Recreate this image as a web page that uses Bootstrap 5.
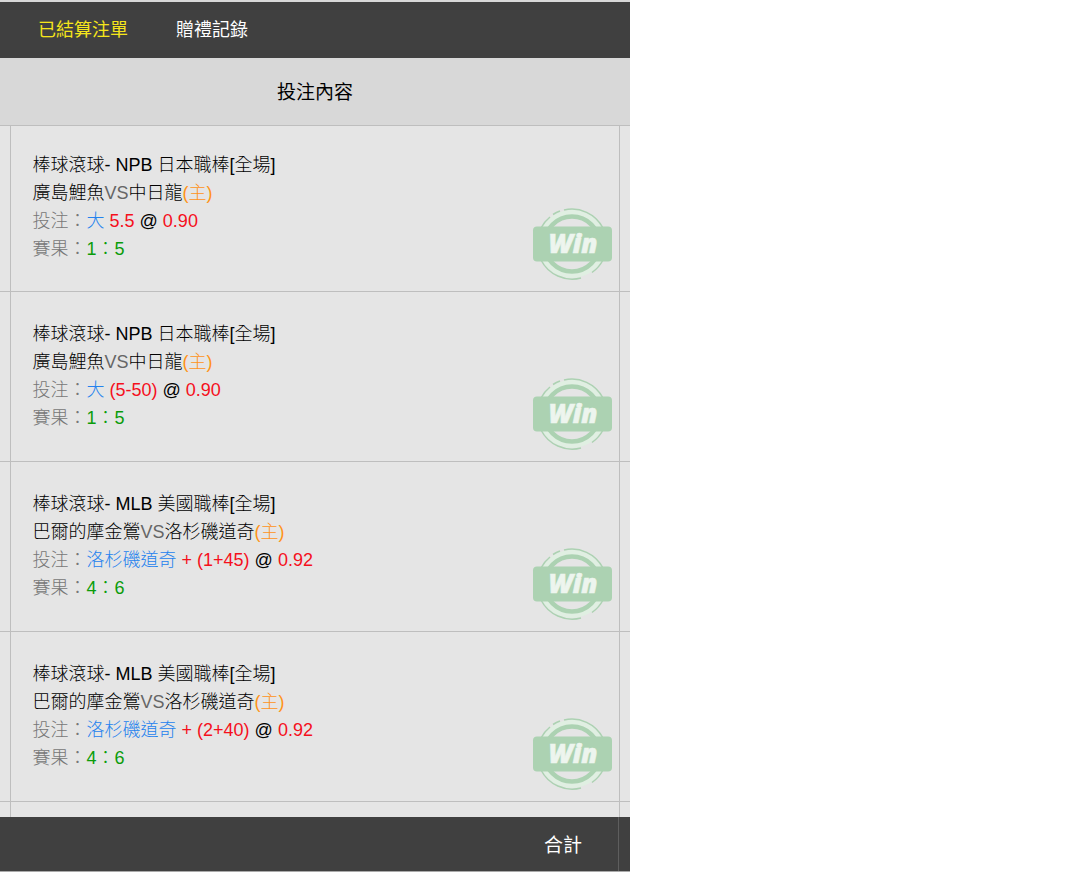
<!DOCTYPE html>
<html lang="zh-Hant">
<head>
<meta charset="utf-8">
<meta name="viewport" content="width=device-width, initial-scale=1">
<title>已結算注單</title>
<link href="https://cdn.jsdelivr.net/npm/bootstrap@5.3.0/dist/css/bootstrap.min.css" rel="stylesheet">
<style>
  body { font-family: "Liberation Sans", "Noto Sans CJK TC", sans-serif; font-size: 18px; line-height: 28px; color: #000; background: #fff; }
  .bets-panel { background: #e5e5e5; border-top: 2px solid #d8d8d8; border-bottom: 1px solid #aaa; }
  .bar-dark { background: #404040; color: #fff; }
  .bar-tabs { height: 56px; padding-left: 38px; gap: 48px; }
  .bar-tabs .nav-link { padding: 0; color: #fff; }
  .bar-tabs .nav-link.active { color: #f5e51b; }
  .bets-table th, .bets-table td { padding: 0; border: 0 solid #bebebe; }
  .bets-table thead th { height: 67px; padding-top: 4px; background: #d8d8d8; border-bottom-width: 1px; font-size: 19px; font-weight: 400; }
  .bets-table tbody td { border-bottom-width: 1px; }
  .bets-table .bet-cell { border-left-width: 1px; border-right-width: 1px; }
  .edge-start { width: 10px; }
  .edge-end { width: 11px; }
  .bet-entry { min-height: 169px; padding: 28px 7px 11px 22px; font-weight: 300; }
  tbody tr:first-child .bet-entry { min-height: 165px; padding-top: 25px; }
  .bet-line { color: #777; }
  .team-vs { color: #666; }
  .home-mark { color: #ff9318; }
  .pick { color: #2482ee; }
  .odds { color: #f5101c; }
  .score { color: #0a9c0a; }
  .win-stamp { width: 80px; height: 72px; }
  .bar-total { height: 54px; font-size: 19px; }
  .bar-total .total-label { border-right: 1px solid #5e5e5e; padding: 4px 36px 0 0; }
</style>
</head>
<body>
<svg class="d-none" aria-hidden="true">
  <symbol id="win" viewBox="0 0 80 72">
    <g fill="none" stroke="#acd2b2">
      <circle cx="40" cy="36" r="31.5" stroke="#e0efe2" stroke-width="5"/>
      <circle cx="40" cy="36" r="27.5" stroke-width="4.5"/>
      <path d="M9 20A35 35 0 0 1 18 9M21 6.500A35 35 0 0 1 28 3M32 2A35 35 0 0 1 71 20M9 52A35 35 0 0 0 49 70M60 64.500A35 35 0 0 0 71 52" stroke-width="1.500"/>
    </g>
    <rect x="1" y="18.500" width="79" height="35" rx="4" fill="#acd2b2"/>
    <text x="41" y="45" text-anchor="middle" font-family="Open Sans, sans-serif" font-size="26" font-weight="800" font-style="italic" fill="#edf5ee" stroke="#edf5ee" stroke-width=".6">Win</text>
  </symbol>
</svg>
<div class="container-fluid p-0">
  <div class="row g-0">
    <main class="col-7 bets-panel vh-100 d-flex flex-column">
      <nav class="nav bar-dark bar-tabs flex-shrink-0 align-items-center">
        <a class="nav-link active" href="#settled" aria-current="page">已結算注單</a>
        <a class="nav-link" href="#gifts">贈禮記錄</a>
      </nav>
      <div class="flex-fill overflow-hidden">
        <table class="bets-table w-100">
          <thead>
            <tr><th colspan="3" class="text-center" scope="col">投注內容</th></tr>
          </thead>
          <tbody>
            <tr>
              <td class="edge-start"></td>
              <td class="bet-cell"><div class="bet-entry d-flex justify-content-between">
                <div>
                  <div>棒球滾球- NPB 日本職棒[全場]</div>
                  <div>廣島鯉魚<span class="team-vs">VS</span>中日龍<span class="home-mark">(主)</span></div>
                  <div class="bet-line">投注：<span class="pick">大</span> <span class="odds">5.5</span> <span class="text-black">@</span> <span class="odds">0.90</span></div>
                  <div class="bet-line">賽果：<span class="score">1：5</span></div>
                </div>
                <svg class="win-stamp align-self-end"><use href="#win"/></svg>
              </div></td>
              <td class="edge-end"></td>
            </tr>
            <tr>
              <td></td>
              <td class="bet-cell"><div class="bet-entry d-flex justify-content-between">
                <div>
                  <div>棒球滾球- NPB 日本職棒[全場]</div>
                  <div>廣島鯉魚<span class="team-vs">VS</span>中日龍<span class="home-mark">(主)</span></div>
                  <div class="bet-line">投注：<span class="pick">大</span> <span class="odds">(5-50)</span> <span class="text-black">@</span> <span class="odds">0.90</span></div>
                  <div class="bet-line">賽果：<span class="score">1：5</span></div>
                </div>
                <svg class="win-stamp align-self-end"><use href="#win"/></svg>
              </div></td>
              <td></td>
            </tr>
            <tr>
              <td></td>
              <td class="bet-cell"><div class="bet-entry d-flex justify-content-between">
                <div>
                  <div>棒球滾球- MLB 美國職棒[全場]</div>
                  <div>巴爾的摩金鶯<span class="team-vs">VS</span>洛杉磯道奇<span class="home-mark">(主)</span></div>
                  <div class="bet-line">投注：<span class="pick">洛杉磯道奇</span> <span class="odds">+ (1+45)</span> <span class="text-black">@</span> <span class="odds">0.92</span></div>
                  <div class="bet-line">賽果：<span class="score">4：6</span></div>
                </div>
                <svg class="win-stamp align-self-end"><use href="#win"/></svg>
              </div></td>
              <td></td>
            </tr>
            <tr>
              <td></td>
              <td class="bet-cell"><div class="bet-entry d-flex justify-content-between">
                <div>
                  <div>棒球滾球- MLB 美國職棒[全場]</div>
                  <div>巴爾的摩金鶯<span class="team-vs">VS</span>洛杉磯道奇<span class="home-mark">(主)</span></div>
                  <div class="bet-line">投注：<span class="pick">洛杉磯道奇</span> <span class="odds">+ (2+40)</span> <span class="text-black">@</span> <span class="odds">0.92</span></div>
                  <div class="bet-line">賽果：<span class="score">4：6</span></div>
                </div>
                <svg class="win-stamp align-self-end"><use href="#win"/></svg>
              </div></td>
              <td></td>
            </tr>
            <tr>
              <td></td>
              <td class="bet-cell"><div class="bet-entry"></div></td>
              <td></td>
            </tr>
          </tbody>
        </table>
      </div>
      <footer class="bar-dark bar-total flex-shrink-0 d-flex">
        <div class="total-label flex-fill d-flex align-items-center justify-content-end">合計</div>
        <div class="edge-end"></div>
      </footer>
    </main>
  </div>
</div>
<script src="https://cdn.jsdelivr.net/npm/bootstrap@5.3.0/dist/js/bootstrap.bundle.min.js"></script>
</body>
</html>
